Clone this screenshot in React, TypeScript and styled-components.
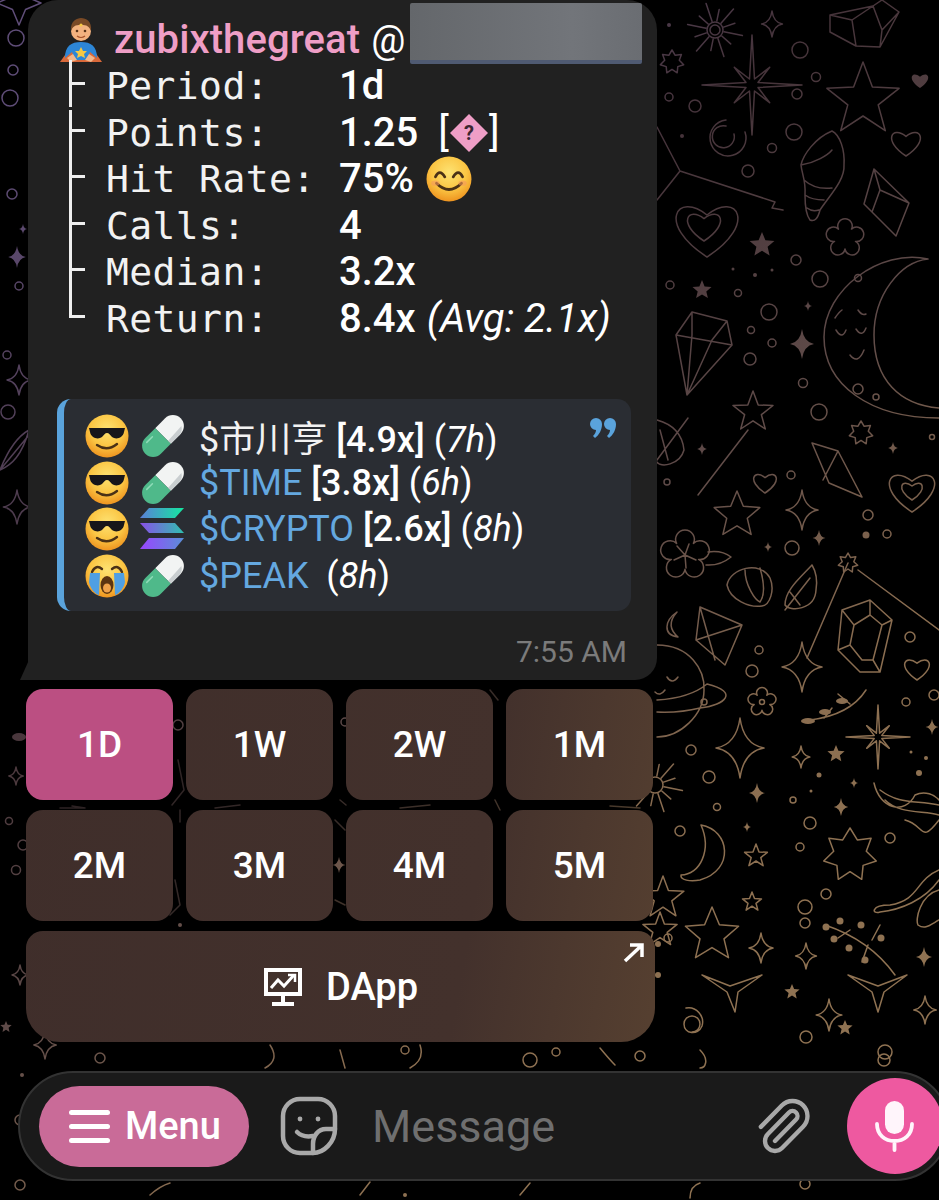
import React from 'react';
import styled, { createGlobalStyle } from 'styled-components';
import { Paperclip } from 'lucide-react';

const GlobalStyle = createGlobalStyle`
  html, body { margin: 0; padding: 0; background: #000; }
  body { font-family: Roboto, "Noto Sans CJK SC", sans-serif; }
`;

const Page = styled.div`
  position: relative;
  width: 939px;
  height: 1200px;
  overflow: hidden;
  background: #000;
`;

const WallpaperSvg = styled.svg`
  position: absolute;
  inset: 0;
`;

const Content = styled.div`
  position: relative;
  display: flex;
  flex-direction: column;
  height: 100%;
`;

const Bubble = styled.div`
  position: relative;
  box-sizing: border-box;
  width: 629px;
  height: 680px;
  margin-left: 28px;
  padding-top: 3px;
  background: #212121;
  border-radius: 30px 30px 22px 0;
  color: #fff;

  &::before {
    content: '';
    position: absolute;
    left: -8px;
    bottom: 0;
    width: 9px;
    height: 20px;
    background: #212121;
    clip-path: polygon(100% 0, 100% 100%, 0 100%);
  }
`;

const Header = styled.div`
  display: flex;
  height: 60px;
  padding-left: 29px;
`;

const HeaderEmoji = styled.span`
  display: block;
  width: 48px;
  height: 46px;
  margin-top: 15px;
  flex: none;
`;

const Name = styled.span`
  margin-left: 9px;
  font-size: 40px;
  font-weight: 500;
  line-height: 74px;
  letter-spacing: 0.1px;
  color: #ef9ec6;
`;

const At = styled.span`
  margin-left: 11px;
  font-size: 38px;
  line-height: 74px;
`;

const Redacted = styled.div`
  width: 232px;
  height: 61px;
  margin-left: 5px;
  box-sizing: border-box;
  border-bottom: 4px solid #4f5a72;
  background: linear-gradient(90deg, #64676b, #72757a 70%, #6a6d72);
  border-radius: 2px;
  flex: none;
`;

const StatList = styled.div`
  padding-left: 41px;
`;

const StatRow = styled.div`
  display: flex;
  height: 46.5px;
`;

const Branch = styled.span<{ $last?: boolean; $first?: boolean }>`
  position: relative;
  box-sizing: border-box;
  flex: none;
  width: 37px;
  height: ${(p) => (p.$last ? '22px' : '100%')};
  margin-top: ${(p) => (p.$first ? '-3px' : '0')};
  padding-top: ${(p) => (p.$first ? '3px' : '0')};
  border-left: 3px solid #efefef;

  &::after {
    content: '';
    position: absolute;
    left: 0;
    top: ${(p) => (p.$first ? '22px' : '19px')};
    width: 13px;
    height: 3px;
    background: #efefef;
  }
`;

const StatLabel = styled.span`
  flex: none;
  width: 233px;
  font-family: "DejaVu Sans Mono", monospace;
  font-size: 38px;
  line-height: 46px;
  letter-spacing: 0.4px;
  color: #f2f2f2;
`;

const StatValue = styled.span`
  display: flex;
  align-items: center;
  font-size: 40px;
  font-weight: 500;
  line-height: 46px;
  white-space: pre;
`;

const Bracket = styled.span<{ $open?: boolean }>`
  font-weight: 400;
  margin-left: ${(p) => (p.$open ? '20px' : '1px')};
`;

const Avg = styled.em`
  font-weight: 400;
  margin-left: 11px;
`;

const InlineEmoji = styled.span`
  display: block;
  width: 46px;
  height: 46px;
  margin-left: 12px;
`;

const DiamondBox = styled.span`
  display: block;
  width: 38px;
  height: 38px;
  margin: 0 0 0 1px;
`;

const Quote = styled.div`
  position: relative;
  box-sizing: border-box;
  width: 574px;
  height: 212px;
  margin: 57px 0 0 29px;
  padding: 14px 0 0 21px;
  background: #2a2d33;
  border-left: 7px solid #5aa3dc;
  border-radius: 14px;
`;

const QuoteMark = styled.span`
  position: absolute;
  top: 19px;
  right: 15px;
  width: 26px;
  height: 20px;
`;

const CallRow = styled.div`
  display: flex;
  align-items: center;
  height: 46.6px;
`;

const CallIcon = styled.span`
  display: block;
  flex: none;
  width: 44px;
  height: 44px;
  margin-right: 12px;
`;

const CallText = styled.span`
  margin-left: 2px;
  font-size: 36px;
  white-space: pre;
`;

const Ticker = styled.span<{ $plain?: boolean }>`
  color: ${(p) => (p.$plain ? '#f2f2f2' : '#64a8e0')};
`;

const Multiple = styled.span`
  font-weight: 500;
`;

const Stamp = styled.div`
  margin-top: 24px;
  padding-right: 30px;
  font-size: 30px;
  line-height: 34px;
  text-align: right;
  color: #7b7b7b;
`;

const Keyboard = styled.div`
  display: grid;
  grid-template-columns: repeat(4, 147px);
  grid-auto-rows: 111px;
  gap: 10px 13px;
  margin: 9px 0 0 26px;
`;

const KeyButton = styled.button<{ $active?: boolean }>`
  position: relative;
  border: 0;
  padding: 0;
  border-radius: 17px;
  font-family: Roboto, sans-serif;
  font-size: 37px;
  font-weight: 500;
  color: #fff;
  background: ${(p) =>
    p.$active ? '#bb4f82' : 'linear-gradient(100deg, #3e2d2a 0%, #43312c 55%, #553f30 72%) fixed'};
`;

const WideKey = styled(KeyButton)`
  display: flex;
  align-items: center;
  justify-content: center;
  gap: 23px;
  grid-column: 1 / -1;
  margin-right: -2px;
  border-radius: 17px 17px 34px 34px;
  font-size: 38px;
`;

const OpenArrow = styled.svg`
  position: absolute;
  top: 12px;
  right: 11px;
`;

const Composer = styled.div`
  display: flex;
  align-items: center;
  box-sizing: border-box;
  width: 932px;
  height: 110px;
  margin: 29px 0 0 18px;
  padding-left: 19px;
  background: #1a1a1a;
  border: 2px solid #333;
  border-radius: 55px;
`;

const MenuButton = styled.button`
  display: flex;
  align-items: center;
  gap: 15px;
  box-sizing: border-box;
  width: 210px;
  height: 81px;
  padding: 0 0 0 30px;
  border: 0;
  border-radius: 41px;
  background: #c96b98;
  color: #fff;
  font-family: Roboto, sans-serif;
  font-size: 38px;
  font-weight: 500;
`;

const Burger = styled.span`
  display: flex;
  flex-direction: column;
  gap: 9px;

  & > i {
    display: block;
    width: 41px;
    height: 5px;
    border-radius: 3px;
    background: #fff;
  }
`;

const StickerIcon = styled.svg`
  flex: none;
  margin-left: 31px;
`;

const Placeholder = styled.span`
  flex: 1;
  margin-left: 34px;
  font-size: 45px;
  color: #6f6f6f;
`;

const ClipIcon = styled(Paperclip)`
  flex: none;
  margin-right: 32px;
  transform: rotate(180deg);
`;

const MicButton = styled.div`
  display: flex;
  align-items: center;
  justify-content: center;
  flex: none;
  width: 96px;
  height: 96px;
  margin-right: 5px;
  border-radius: 50%;
  background: #ee59a0;
`;

const SolanaMark = styled.svg`
  display: block;
  margin-left: -3px;
`;

/* wallpaper shapes */
const star = (cx: number, cy: number, R: number, n = 5, k = 0.45) => {
  let d = '';
  for (let i = 0; i < n * 2; i++) {
    const r = i % 2 ? R * k : R;
    const a = -Math.PI / 2 + (i * Math.PI) / n;
    d += `${i ? 'L' : 'M'}${(cx + r * Math.cos(a)).toFixed(1)} ${(cy + r * Math.sin(a)).toFixed(1)}`;
  }
  return d + 'Z';
};

const sparkle = (x: number, y: number, r: number) => {
  const c = r * 0.12;
  const w = r * 0.8;
  return `M${x} ${y - r}Q${x + c} ${y - c} ${x + w} ${y}Q${x + c} ${y + c} ${x} ${y + r}Q${x - c} ${y + c} ${x - w} ${y}Q${x - c} ${y - c} ${x} ${y - r}Z`;
};

const heart = (x: number, y: number, s: number) =>
  `M${x} ${y + s}C${x - 1.7 * s} ${y - 0.1 * s} ${x - s} ${y - 1.2 * s} ${x} ${y - 0.4 * s}C${x + s} ${y - 1.2 * s} ${x + 1.7 * s} ${y - 0.1 * s} ${x} ${y + s}Z`;

const spike = (x: number, y: number, R: number) => {
  let d = '';
  for (let i = 0; i < 16; i++) {
    const r = i % 2 ? R * 0.13 : i % 4 === 0 ? R : R * 0.5;
    const a = (i * Math.PI) / 8;
    d += `${i ? 'L' : 'M'}${(x + r * Math.sin(a)).toFixed(1)} ${(y - r * Math.cos(a)).toFixed(1)}`;
  }
  return d + 'Z';
};

const sun = (x: number, y: number, r: number) => {
  let d = '';
  for (let i = 0; i < 12; i++) {
    const a = (i * Math.PI) / 6 + 0.2;
    const R = i % 2 ? r * 3 : r * 4;
    d += `M${(x + r * 1.3 * Math.cos(a)).toFixed(1)} ${(y + r * 1.3 * Math.sin(a)).toFixed(1)}L${(x + R * Math.cos(a)).toFixed(1)} ${(y + R * Math.sin(a)).toFixed(1)}`;
  }
  return d;
};

// scalloped flower: one arc per petal between notches
const flower = (x: number, y: number, R: number, n = 5) => {
  const notch = R * 0.55;
  const petal = R * 0.36;
  let d = '';
  for (let i = 0; i <= n; i++) {
    const a = -Math.PI / 2 + Math.PI / n + (i * 2 * Math.PI) / n;
    const px = (x + notch * Math.cos(a)).toFixed(1);
    const py = (y + notch * Math.sin(a)).toFixed(1);
    d += i ? `A${petal} ${petal} 0 1 1 ${px} ${py}` : `M${px} ${py}`;
  }
  return d + 'Z';
};

const rings: [number, number, number][] = [
  [16, 38, 8], [13, 70, 5], [10, 98, 8], [12, 194, 5], [19, 286, 4], [7, 355, 4], [8, 412, 7],
  [800, 50, 8], [816, 77, 4.5], [797, 94, 5], [669, 97, 4], [695, 106, 6], [794, 132, 8], [772, 148, 4.5],
  [748, 171, 6], [796, 260, 5], [820, 279, 8], [670, 285, 4], [738, 293, 3.5], [769, 312, 8], [751, 330, 3.5],
  [772, 343, 4], [750, 359, 6], [803, 383, 4.5], [819, 412, 8], [858, 278, 3.5], [858, 389, 5], [876, 397, 3],
  [932, 437, 2.5], [667, 482, 3], [791, 475, 4], [868, 515, 5], [887, 534, 4], [792, 548, 7], [759, 650, 4],
  [752, 671, 6], [910, 637, 5], [691, 750, 5], [709, 777, 6], [717, 807, 3.5], [680, 831, 5], [793, 800, 3],
  [810, 823, 6], [800, 847, 4], [890, 838, 5], [906, 702, 4], [934, 695, 5], [805, 907, 7], [826, 894, 5],
  [704, 702, 3], [9, 821, 3.5], [16, 870, 4.5], [23, 845, 5], [178, 725, 5], [345, 722, 4], [100, 1058, 5],
  [405, 1050, 4], [530, 1060, 7], [556, 1052, 4], [806, 1037, 6], [885, 1052, 7], [20, 1120, 5], [884, 1060, 6],
  [20, 1185, 5], [805, 1184, 5], [640, 1056, 5], [668, 938, 4], [805, 923, 5],
];

const dots: [number, number, number][] = [
  [682, 136, 2], [669, 25, 2], [733, 269, 1.5], [755, 275, 2], [772, 270, 1.5], [866, 535, 3.5], [819, 775, 2.5],
  [811, 791, 1.5], [911, 752, 1.5], [926, 758, 2], [919, 773, 3], [658, 944, 3], [22, 1075, 2], [658, 975, 3],
  [180, 925, 2], [405, 1195, 2],
];

const sparks: [number, number, number][] = [
  [23, 229, 5], [17, 257, 11], [808, 306, 5], [802, 344, 15], [702, 449, 6], [893, 448, 6], [768, 547, 5],
  [819, 538, 8], [757, 793, 10], [854, 783, 5], [841, 807, 9], [932, 727, 8], [747, 827, 5], [924, 957, 10], [339, 865, 8],
];

const outlineSparks: [number, number, number][] = [
  [772, 24, 13], [19, 380, 15], [17, 507, 17], [802, 510, 20], [802, 667, 25], [740, 748, 30], [801, 757, 11],
  [761, 948, 15], [806, 956, 13], [829, 1015, 16], [16, 776, 9], [20, 975, 10], [45, 1045, 14], [925, 1010, 14],
];

const filledStars: [number, number, number][] = [
  [762, 245, 13], [702, 290, 10], [836, 754, 9], [792, 992, 8], [6, 1027, 6], [845, 1028, 8],
];

const outlineStars: [number, number, number, number][] = [
  [863, 100, 38, 5], [756, 856, 12, 5], [663, 898, 22, 5], [752, 902, 10, 5], [672, 62, 12, 7],
  [861, 433, 12, 7], [850, 855, 27, 7], [19, 3, 22, 4], [660, 930, 18, 5], [753, 412, 21, 5],
];

const lines = [
  'M657 127L680 171L775 202M680 171L657 200M775 202L772 208L783 210',
  // wand
  'M698 495L748 430',
  // shell
  'M832 131C815 138 803 155 801 165C802 175 806 180 805 195C805 205 806 215 810 220C815 222 818 218 820 210C830 195 845 180 844 165C845 150 840 135 832 131ZM801 165C815 163 828 155 832 150M804 180Q815 190 832 188M805 195Q812 200 824 200M807 208Q812 212 819 210',
  // gems
  'M873 6L830 15L830 32L856 46L880 47L899 12L882 0ZM830 15L852 20L873 6L882 30L880 47M852 20L856 46M882 30L899 12',
  'M874 169L864 204L896 236L909 203ZM874 169L880 190L909 203M880 190L872 212',
  'M676 335L692 312L727 321L732 345L687 395ZM676 335L732 345M692 335L687 395M712 340L687 395M692 312L692 335M727 321L712 340',
  'M812 443L838 451L862 497L829 483ZM838 451L823 480',
  'M842 610L870 600L892 620L880 672L860 672L838 650ZM854 625L870 615L882 625L873 660L862 660L850 645ZM842 610L854 625M870 600L870 615M892 620L882 625M880 672L873 660M838 650L850 645',
  'M700 607L742 625L725 665L696 640ZM700 607L715 660M696 640L742 625',
  // lines around the small star
  'M848 563L807 658M858 570L939 630',
  // leaf
  'M657 420C668 423 682 430 684 450C680 465 660 468 657 462M657 460L688 418M660 430L668 460',
  'M0 470C10 445 20 435 29 430C22 455 12 465 0 470M0 470L29 435',
  'M812 565C800 578 785 590 785 605C790 612 815 610 816 590C818 578 815 570 812 565ZM785 610L810 578M790 592L800 605',
  // shell fan
  'M727 585C730 568 760 560 770 578C775 590 770 605 762 606C750 608 730 600 727 585ZM745 570C745 585 755 600 760 602M760 568C765 585 765 595 760 602',
  // moon
  'M928 259C880 248 824 290 824 337C824 385 870 418 939 418M928 259C900 262 874 295 874 335C874 380 900 405 939 408',
  'M835 318Q839 312 842 310M858 310Q862 316 866 314M836 330Q842 340 846 330M856 329Q862 338 866 328M850 355Q858 365 864 350',
  // little moons
  'M677 612C665 620 662 635 678 637C670 630 668 622 677 612Z',
  'M701 825C730 830 735 870 700 880C690 882 680 880 681 875C700 875 712 850 701 825Z',
  // planet
  'M657 645C690 645 705 670 704 690C704 715 680 737 657 737M657 700Q690 698 707 684C740 692 725 705 700 708Q680 713 657 712',
  'M667 677Q672 685 678 677M655 692Q660 697 665 690',
  // unicorn
  'M874 783C880 810 905 815 915 795C925 790 935 795 939 800M880 790C900 805 915 800 939 805M885 800C900 815 925 810 939 815M905 820C925 825 920 845 939 820',
  'M939 870C915 880 920 900 890 905C870 905 872 915 880 912C900 910 925 900 939 880M939 890C920 895 915 920 918 925C925 930 930 925 939 920',
  // sprig outlines
  'M810 720Q850 715 866 690M832 708L824 718M850 704L838 694',
  'M825 925Q870 940 895 975M850 930L838 938M868 945L862 962M872 940L880 925',
  // spiky half stars
  'M702 975L730 986L762 975L738 992L735 1012L727 992ZM848 975L878 986L907 975L884 992L878 1012L872 992Z',
  'M692 1032a8 8 0 1 0 -8 -8c0 10 14 12 18 2c3 -10 -6 -20 -16 -18',
  'M270 1045Q280 1060 265 1068M340 1050L345 1068M420 1045Q425 1060 410 1068M600 1048Q610 1060 615 1065M700 1050C710 1060 705 1068 700 1068',
  'M360 1195L370 1182M150 1195Q160 1186 170 1183M520 1195L530 1183M690 1198Q690 1186 700 1183',
];

// dimmed bits that only show through the gaps of the keyboard
const gapLines = [
  'M178 760L184 790L172 805M180 810L180 822M175 880L180 905L170 915M335 820L345 830M335 900L345 905',
  'M490 690L498 700M495 800L500 810M340 800L346 805M60 808L85 808L72 806M215 808L240 805M400 808L430 805M610 806L640 808',
];

const Wallpaper = () => (
  <WallpaperSvg width="939" height="1200" viewBox="0 0 939 1200" fill="none" aria-hidden="true">
    <defs>
      <linearGradient id="ink" gradientUnits="userSpaceOnUse" x1="0" y1="150" x2="700" y2="1000">
        <stop offset="0" stopColor="#5f4d78" />
        <stop offset="0.38" stopColor="#45333a" />
        <stop offset="0.62" stopColor="#5e4a48" />
        <stop offset="0.85" stopColor="#8a6d50" />
        <stop offset="1" stopColor="#8f7252" />
      </linearGradient>
    </defs>
    <g stroke="url(#ink)" strokeWidth="1.5" strokeLinejoin="round" strokeLinecap="round">
      {rings.map(([x, y, r]) => (
        <circle key={`${x}-${y}`} cx={x} cy={y} r={r} />
      ))}
      {outlineSparks.map(([x, y, r]) => (
        <path key={`${x}-${y}`} d={sparkle(x, y, r)} />
      ))}
      {outlineStars.map(([x, y, r, n]) => (
        <path key={`${x}-${y}`} d={star(x, y, r, n, n === 7 ? 0.62 : 0.42)} />
      ))}
      {lines.map((d) => (
        <path key={d} d={d} />
      ))}
      {gapLines.map((d) => (
        <path key={d} d={d} opacity="0.55" />
      ))}
      <path d={flower(685, 555, 26)} />
      <path d={flower(845, 238, 20)} />
      <path d={flower(762, 702, 15)} />
      <circle cx="762" cy="702" r="2.5" />
      <path d="M685 555L696 560M685 555L677 546M685 555L689 544M685 555L674 560M685 555L686 568" />
      <path d="M708 552Q722 550 731 557Q720 566 706 565" />
      <path d={spike(752, 85, 50)} />
      <path d={spike(878, 737, 32)} />
      <path d={star(848, 563, 10, 7, 0.6)} />
      <path d={sun(715, 30, 7)} />
      <circle cx="715" cy="30" r="8" />
      <circle cx="715" cy="30" r="5" />
      <path d={sun(655, 785, 7)} />
      <circle cx="655" cy="785" r="8" />
      <path d={heart(906, 142, 14)} />
      <path d={heart(707, 227, 30)} />
      <path d={heart(704, 225, 16)} />
      <path d={heart(765, 482, 11)} />
      <path d={heart(912, 490, 22)} />
      <path d={heart(912, 490, 10)} />
      <path d={heart(917, 668, 12)} />
      <path d={star(737, 515, 24)} />
      <path d={star(712, 935, 28)} />
      <path d="M726 126a11 11 0 1 0 8 8M726 120a18 18 0 1 0 19 12" />
    </g>
    <g fill="url(#ink)">
      {sparks.map(([x, y, r]) => (
        <path key={`${x}-${y}`} d={sparkle(x, y, r)} />
      ))}
      {filledStars.map(([x, y, r]) => (
        <path key={`${x}-${y}`} d={star(x, y, r)} />
      ))}
      {dots.map(([x, y, r]) => (
        <circle key={`${x}-${y}`} cx={x} cy={y} r={r} />
      ))}
      <path d={heart(920, 80, 8)} />
      <ellipse cx="19" cy="737" rx="7" ry="4" />
      <ellipse cx="808" cy="721" rx="7" ry="3" />
      <ellipse cx="825" cy="712" rx="6" ry="3" />
      <ellipse cx="842" cy="701" rx="6" ry="3" />
      <circle cx="826" cy="927" r="3.5" />
      <circle cx="840" cy="921" r="3.5" />
      <circle cx="861" cy="925" r="3.5" />
      <circle cx="881" cy="938" r="3.5" />
      <circle cx="834" cy="939" r="3.5" />
      <circle cx="849" cy="948" r="3.5" />
      <circle cx="865" cy="960" r="3.5" />
    </g>
  </WallpaperSvg>
);

/* emoji and token drawings */
const Hero = () => (
  <svg width="48" height="46" viewBox="0 0 48 46">
    <path d="M11 44L3 44L13 30L35 30L45 44L37 44Z" fill="#d9693a" />
    <path d="M8 40C8 28 14 24 24 24C34 24 40 28 40 40L33 34L30 42L18 42L15 34Z" fill="#2d86d6" />
    <path d="M18 32L24 28L30 32L27 40L21 40Z" fill="#2d86d6" />
    <path d="M24 29L26 33L30 33L27 36L28 40L24 38L20 40L21 36L18 33L22 33Z" fill="#f6c944" />
    <path d="M10 40L16 36L20 42L14 44ZM38 40L32 36L28 42L34 44Z" fill="#f2b78b" />
    <circle cx="24" cy="13" r="10" fill="#f3b27f" />
    <path d="M14 13C13 3 20 0 24 0C29 0 35 3 34 13C32 8 30 7 24 7C18 7 16 8 14 13Z" fill="#7a4a26" />
    <circle cx="24" cy="7" r="1.6" fill="#f6c944" />
    <circle cx="20" cy="13" r="1.3" fill="#5a3318" />
    <circle cx="28" cy="13" r="1.3" fill="#5a3318" />
    <path d="M20 18Q24 21 28 18" stroke="#a5522a" strokeWidth="1.2" fill="none" />
  </svg>
);

const Face = ({ id }: { id: string }) => (
  <>
    <defs>
      <radialGradient id={id} cx="50%" cy="35%" r="65%">
        <stop offset="0" stopColor="#fde272" />
        <stop offset="0.6" stopColor="#fbc543" />
        <stop offset="1" stopColor="#ee9420" />
      </radialGradient>
    </defs>
    <circle cx="22" cy="22" r="21.5" fill={`url(#${id})`} />
  </>
);

const Smiley = () => (
  <svg width="46" height="46" viewBox="0 0 44 44">
    <Face id="smileFace" />
    <path d="M9 20Q13 12 18 20M26 20Q31 12 35 20" stroke="#4a3116" strokeWidth="2.6" fill="none" strokeLinecap="round" />
    <path d="M10 26Q22 38 34 26" stroke="#4a3116" strokeWidth="2.6" fill="none" strokeLinecap="round" />
    <ellipse cx="9" cy="26" rx="4" ry="2.5" fill="#f59a5c" opacity="0.6" />
    <ellipse cx="35" cy="26" rx="4" ry="2.5" fill="#f59a5c" opacity="0.6" />
  </svg>
);

const CoolFace = () => (
  <svg width="44" height="44" viewBox="0 0 44 44">
    <Face id="coolFace" />
    <path d="M4 14H40L39 18C38 24 31 26 27 23C25 21 24 19 22 19C20 19 19 21 17 23C13 26 6 24 5 18Z" fill="#17161a" />
    <path d="M12 31Q22 38 32 30" stroke="#4a3116" strokeWidth="2.4" fill="none" strokeLinecap="round" />
  </svg>
);

const SobFace = () => (
  <svg width="44" height="44" viewBox="0 0 44 44">
    <Face id="sobFace" />
    <path d="M7 18Q11 10 17 15M27 15Q33 10 37 18" stroke="#4a3116" strokeWidth="2.4" fill="none" strokeLinecap="round" />
    <path d="M5 19H15L14 41C10 40 5 34 4 28ZM29 19H39L40 28C39 34 34 40 30 41Z" fill="#4f9fe3" />
    <ellipse cx="22" cy="31" rx="6.5" ry="9" fill="#5c3410" />
    <ellipse cx="22" cy="34" rx="4" ry="4.5" fill="#f0a24a" />
  </svg>
);

const Pill = () => (
  <svg width="44" height="44" viewBox="0 0 44 44" overflow="visible">
    <g transform="rotate(45 22 22)">
      <path d="M11 8a11 11 0 0 1 22 0V22H11Z" fill="#f2f4f3" />
      <path d="M28 2Q33 5 33 10V22H29Z" fill="#c9ced0" />
      <path d="M11 22H33V36a11 11 0 0 1 -22 0Z" fill="#4fb98a" />
      <path d="M15 30V38" stroke="#8fdcb8" strokeWidth="1.5" fill="none" strokeLinecap="round" />
    </g>
  </svg>
);

const Solana = () => (
  <SolanaMark width="48" height="44" viewBox="0 0 44 44">
    <defs>
      <linearGradient id="solTop" x1="0" y1="0" x2="1" y2="0">
        <stop offset="0" stopColor="#5a7fd8" />
        <stop offset="1" stopColor="#14e8a0" />
      </linearGradient>
      <linearGradient id="solMid" x1="0" y1="0" x2="1" y2="0">
        <stop offset="0" stopColor="#8a4fe8" />
        <stop offset="1" stopColor="#2fc0b0" />
      </linearGradient>
      <linearGradient id="solLow" x1="0" y1="0" x2="1" y2="0">
        <stop offset="0" stopColor="#9945ff" />
        <stop offset="1" stopColor="#5a8fd8" />
      </linearGradient>
    </defs>
    <path d="M9 1H44L35 11H0Z" fill="url(#solTop)" />
    <path d="M0 16H35L44 26H9Z" fill="url(#solMid)" />
    <path d="M9 31H44L35 42H0Z" fill="url(#solLow)" />
  </SolanaMark>
);

const AskDiamond = () => (
  <svg width="38" height="38" viewBox="0 0 38 38">
    <path d="M19 0L38 19L19 38L0 19Z" fill="#ef9ec6" />
    <text x="19" y="26" textAnchor="middle" fontFamily="Roboto, sans-serif" fontWeight="700" fontSize="20" fill="#3a2530">?</text>
  </svg>
);

const calls = [
  { face: <CoolFace />, coin: <Pill />, ticker: '$市川亨', plain: true, mult: '[4.9x]', age: '7h' },
  { face: <CoolFace />, coin: <Pill />, ticker: '$TIME', mult: '[3.8x]', age: '6h' },
  { face: <CoolFace />, coin: <Solana />, ticker: '$CRYPTO', mult: '[2.6x]', age: '8h' },
  { face: <SobFace />, coin: <Pill />, ticker: '$PEAK', mult: '', age: '8h' },
];

const keys = ['1D', '1W', '2W', '1M', '2M', '3M', '4M', '5M'];

export default function App() {
  return (
    <Page>
      <GlobalStyle />
      <Wallpaper />
      <Content>
        <Bubble>
          <Header>
            <HeaderEmoji><Hero /></HeaderEmoji>
            <Name>zubixthegreat</Name>
            <At>@</At>
            <Redacted />
          </Header>
          <StatList>
            <StatRow>
              <Branch $first />
              <StatLabel>Period:</StatLabel>
              <StatValue>1d</StatValue>
            </StatRow>
            <StatRow>
              <Branch />
              <StatLabel>Points:</StatLabel>
              <StatValue>
                1.25
                <Bracket $open>[</Bracket>
                <DiamondBox><AskDiamond /></DiamondBox>
                <Bracket>]</Bracket>
              </StatValue>
            </StatRow>
            <StatRow>
              <Branch />
              <StatLabel>Hit Rate:</StatLabel>
              <StatValue>
                75%
                <InlineEmoji><Smiley /></InlineEmoji>
              </StatValue>
            </StatRow>
            <StatRow>
              <Branch />
              <StatLabel>Calls:</StatLabel>
              <StatValue>4</StatValue>
            </StatRow>
            <StatRow>
              <Branch />
              <StatLabel>Median:</StatLabel>
              <StatValue>3.2x</StatValue>
            </StatRow>
            <StatRow>
              <Branch $last />
              <StatLabel>Return:</StatLabel>
              <StatValue>
                8.4x<Avg>(Avg: 2.1x)</Avg>
              </StatValue>
            </StatRow>
          </StatList>
          <Quote>
            <QuoteMark>
              <svg width="26" height="20" viewBox="0 0 26 20" fill="#5aa3dc">
                <path d="M6 0a6 6 0 0 1 6 6c0 6-3 11-7 14l-2-2c2-2 3-4 3-6a6 6 0 0 1 0-12ZM20 0a6 6 0 0 1 6 6c0 6-3 11-7 14l-2-2c2-2 3-4 3-6a6 6 0 0 1 0-12Z" />
              </svg>
            </QuoteMark>
            {calls.map((c) => (
              <CallRow key={c.ticker}>
                <CallIcon>{c.face}</CallIcon>
                <CallIcon>{c.coin}</CallIcon>
                <CallText>
                  <Ticker $plain={c.plain}>{c.ticker}</Ticker> <Multiple>{c.mult}</Multiple> (<em>{c.age}</em>)
                </CallText>
              </CallRow>
            ))}
          </Quote>
          <Stamp>7:55 AM</Stamp>
        </Bubble>
        <Keyboard>
          {keys.map((k) => (
            <KeyButton key={k} $active={k === '1D'}>{k}</KeyButton>
          ))}
          <WideKey>
            <svg width="40" height="40" viewBox="0 0 40 40" fill="none">
              <path d="M1 1H39V29H1Z" fill="#fff" />
              <path d="M5 5H35V25H5Z" fill="#43322c" />
              <path d="M8 21L15 13L21 19L31 8" stroke="#fff" strokeWidth="3" />
              <path d="M25 8H32V15" stroke="#fff" strokeWidth="2.5" />
              <path d="M18 29H22V35H18ZM9 35H31V39H9Z" fill="#fff" />
            </svg>
            DApp
            <OpenArrow width="22" height="20" viewBox="0 0 22 20" fill="none">
              <path d="M3 18L19 3M8 2H20V14" stroke="#fff" strokeWidth="3.5" />
            </OpenArrow>
          </WideKey>
        </Keyboard>
        <Composer>
          <MenuButton>
            <Burger><i /><i /><i /></Burger>
            Menu
          </MenuButton>
          <StickerIcon width="58" height="60" viewBox="0 0 58 60" fill="none" stroke="#a9a9a9" strokeWidth="4.5" strokeLinecap="round" strokeLinejoin="round">
            <path d="M20 3H38A17 17 0 0 1 55 20V33C55 46 44 57 33 57H20A17 17 0 0 1 3 40V20A17 17 0 0 1 20 3Z" />
            <path d="M55 33H46C38 33 33 40 33 48V57" />
            <path d="M17 36C21 40 27 41 33 40" />
            <circle cx="20" cy="23" r="2.4" fill="#a9a9a9" stroke="none" />
            <circle cx="38" cy="23" r="2.4" fill="#a9a9a9" stroke="none" />
          </StickerIcon>
          <Placeholder>Message</Placeholder>
          <ClipIcon size={60} color="#a9a9a9" strokeWidth={1.75} />
          <MicButton>
            <svg width="40" height="52" viewBox="0 0 40 52" fill="none">
              <rect x="10" y="1" width="19" height="33" rx="9.5" fill="#fff5fb" />
              <path d="M2 24C2 35 10 41 19.5 41C29 41 37 35 37 24M19.5 41V50" stroke="#fff5fb" strokeWidth="3.8" strokeLinecap="round" />
            </svg>
          </MicButton>
        </Composer>
      </Content>
    </Page>
  );
}
